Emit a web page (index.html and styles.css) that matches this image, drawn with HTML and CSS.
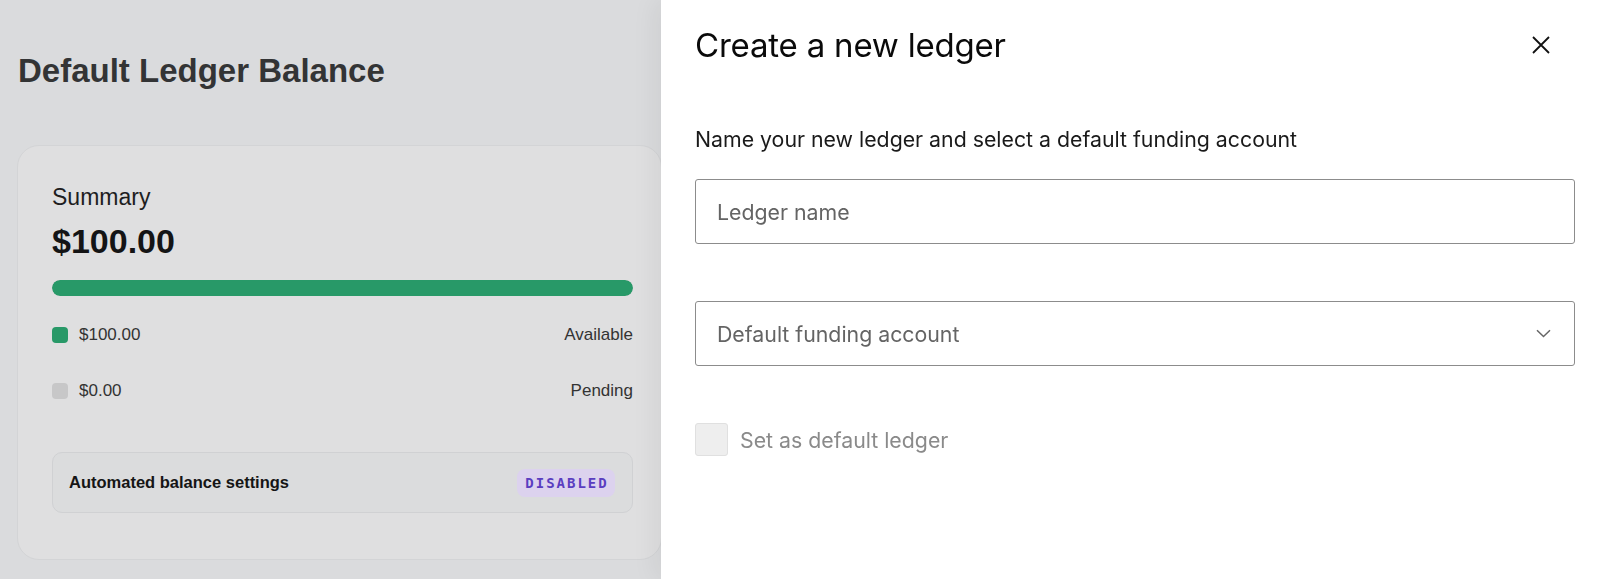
FILE: index.html
```html
<!DOCTYPE html>
<html lang="en">
<head>
<meta charset="utf-8">
<title>Create a new ledger</title>
<link rel="stylesheet" href="styles.css">
</head>
<body>
<main class="page">
  <h1 class="page-title">Default Ledger Balance</h1>
  <section class="card">
    <div class="card-label">Summary</div>
    <div class="card-amount">$100.00</div>
    <div class="bar"><div class="bar-fill" style="width:100%"></div></div>
    <div class="legend-row">
      <span class="legend-left"><span class="dot dot-green"></span>$100.00</span>
      <span>Available</span>
    </div>
    <div class="legend-row legend-row-2">
      <span class="legend-left"><span class="dot dot-gray"></span>$0.00</span>
      <span>Pending</span>
    </div>
    <div class="auto-box">
      <span class="auto-title">Automated balance settings</span>
      <span class="badge">DISABLED</span>
    </div>
  </section>
</main>

<aside class="drawer">
  <div class="drawer-head">
    <h2 class="drawer-title">Create a new ledger</h2>
    <button class="close" aria-label="Close">
      <svg width="20" height="20" viewBox="0 0 20 20"><path d="M2 2 L18 18 M18 2 L2 18" stroke="#111" stroke-width="1.8" fill="none"/></svg>
    </button>
  </div>
  <p class="drawer-sub">Name your new ledger and select a default funding account</p>
  <div class="field">
    <span class="placeholder">Ledger name</span>
  </div>
  <div class="field field-select">
    <span class="placeholder">Default funding account</span>
    <svg class="chevron" width="15" height="9" viewBox="0 0 15 9"><path d="M1 1.2 L7.5 7.5 L14 1.2" stroke="#666" stroke-width="1.5" fill="none"/></svg>
  </div>
  <label class="check">
    <span class="box"></span>
    <span class="check-label">Set as default ledger</span>
  </label>
</aside>
</body>
</html>
```

FILE: styles.css
```css
html, body {
  margin: 0;
  padding: 0;
  height: 100%;
}

body {
  background: #dadbdd;
  font-family: "Liberation Sans", Arial, sans-serif;
  overflow: hidden;
}

.page {
  padding: 51px 0 0 18px;
  width: 644px;
}

.page-title {
  margin: 0;
  font-size: 33px;
  line-height: 40px;
  font-weight: 700;
  color: #333435;
}

.card {
  margin: 54px 0 0 -1px;
  width: 645px;
  box-sizing: border-box;
  background: #dfdfe0;
  border: 1px solid #d3d4d6;
  border-radius: 22px;
  padding: 38px 28px 46px 34px;
}

.card-label {
  font-size: 23px;
  line-height: 26px;
  color: #1e1e1f;
}

.card-amount {
  margin-top: 11px;
  font-size: 34px;
  line-height: 40px;
  font-weight: 700;
  color: #141415;
}

.bar {
  margin-top: 19px;
  height: 16px;
  border-radius: 8px;
  background: #c9c9c9;
  overflow: hidden;
}

.bar-fill {
  height: 100%;
  background: #289968;
  border-radius: 8px;
}

.legend-row {
  margin-top: 27px;
  height: 24px;
  display: flex;
  align-items: center;
  justify-content: space-between;
  font-size: 17px;
  color: #333;
}

.legend-row-2 {
  margin-top: 32px;
}

.legend-left {
  display: flex;
  align-items: center;
  gap: 11px;
}

.dot {
  width: 16px;
  height: 16px;
  border-radius: 4px;
}

.dot-green { background: #289968; }
.dot-gray { background: #c7c7c8; }

.auto-box {
  margin-top: 49px;
  height: 61px;
  box-sizing: border-box;
  background: #dbdcdd;
  border: 1px solid #d0d1d3;
  border-radius: 10px;
  display: flex;
  align-items: center;
  justify-content: space-between;
  padding: 0 17px 0 16px;
}

.auto-title {
  font-size: 16.5px;
  font-weight: 700;
  color: #151515;
}

.badge {
  height: 28px;
  width: 98px;
  box-sizing: border-box;
  display: flex;
  align-items: center;
  justify-content: center;
  background: #dcd2ee;
  border-radius: 8px;
  font-family: "DejaVu Sans Mono", "Liberation Mono", monospace;
  font-size: 14px;
  font-weight: 700;
  letter-spacing: 2px;
  padding-left: 2px;
  color: #5a3dc0;
}

.drawer {
  position: fixed;
  top: 0;
  bottom: 0;
  left: 661px;
  right: 0;
  background: #fff;
  box-shadow: -6px 0 24px rgba(0, 0, 0, 0.06);
  padding: 27px 25px 0 34px;
  font-family: Inter, "Liberation Sans", sans-serif;
}

.drawer-head {
  display: flex;
  align-items: center;
  justify-content: space-between;
}

.drawer-title {
  margin: 0;
  font-size: 33px;
  line-height: 36px;
  font-weight: 400;
  color: #0a0a0a;
  letter-spacing: -0.2px;
}

.close {
  border: 0;
  background: none;
  padding: 0;
  margin-right: 24px;
  width: 20px;
  height: 20px;
  display: flex;
}

.drawer-sub {
  margin: 64px 0 0;
  font-size: 21.3px;
  line-height: 24px;
  color: #1a1a1a;
}

.field {
  margin-top: 28px;
  height: 65px;
  box-sizing: border-box;
  border: 1px solid #8c8c8c;
  border-radius: 3px;
  display: flex;
  align-items: center;
  justify-content: space-between;
  padding: 0 23px 0 21px;
}

.field-select {
  margin-top: 57px;
}

.placeholder {
  font-size: 21.3px;
  color: #646464;
}

.chevron {
  display: block;
}

.check {
  margin-top: 57px;
  display: flex;
  align-items: center;
  gap: 12px;
}

.box {
  width: 33px;
  height: 33px;
  box-sizing: border-box;
  background: #eeeeee;
  border: 1px solid #e0e0e0;
  border-radius: 3px;
}

.check-label {
  font-size: 21.3px;
  color: #8a8a8a;
}
```
